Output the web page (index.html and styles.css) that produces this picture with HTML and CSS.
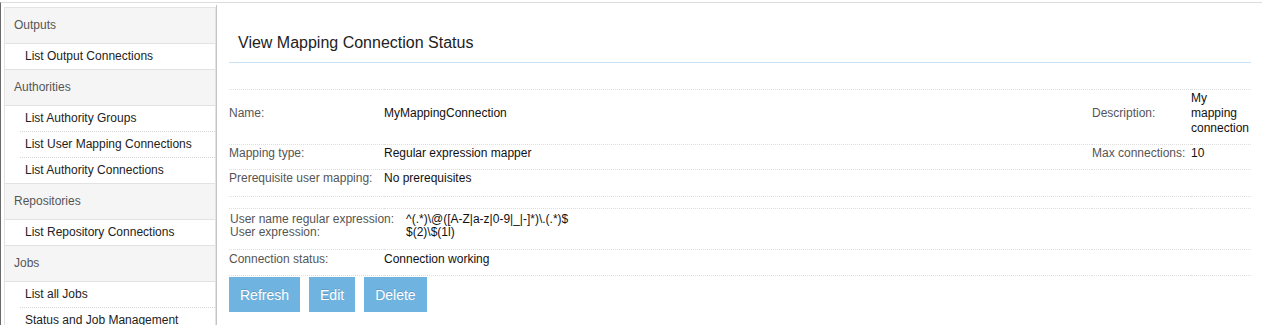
FILE: index.html
```html
<!DOCTYPE html>
<html>
<head>
<meta charset="utf-8">
<title>View Mapping Connection Status</title>
<link rel="stylesheet" href="styles.css">
</head>
<body>
<div class="page">
  <nav class="sidebar">
    <div class="group">
      <div class="group-head">Outputs</div>
      <div class="item">List Output Connections</div>
    </div>
    <div class="group">
      <div class="group-head">Authorities</div>
      <div class="item">List Authority Groups</div>
      <div class="item">List User Mapping Connections</div>
      <div class="item">List Authority Connections</div>
    </div>
    <div class="group">
      <div class="group-head">Repositories</div>
      <div class="item">List Repository Connections</div>
    </div>
    <div class="group">
      <div class="group-head">Jobs</div>
      <div class="item">List all Jobs</div>
      <div class="item">Status and Job Management</div>
    </div>
  </nav>
  <main class="content">
    <h1 class="title">View Mapping Connection Status</h1>
    <table class="details">
      <colgroup>
        <col class="c-label1">
        <col>
        <col class="c-label2">
        <col class="c-value2">
      </colgroup>
      <tr class="row">
        <td class="label">Name:</td>
        <td class="value">MyMappingConnection</td>
        <td class="label">Description:</td>
        <td class="value last">My mapping connection</td>
      </tr>
      <tr class="row">
        <td class="label">Mapping type:</td>
        <td class="value">Regular expression mapper</td>
        <td class="label">Max connections:</td>
        <td class="value last">10</td>
      </tr>
      <tr class="row row-prereq">
        <td class="label">Prerequisite user mapping:</td>
        <td class="value" colspan="3">No prerequisites</td>
      </tr>
      <tr class="row row-spacer">
        <td colspan="4"></td>
      </tr>
      <tr class="row row-nested">
        <td colspan="4">
          <div class="expr">
            <span class="label">User name regular expression:</span>
            <span class="value">^(.*)\@([A-Z|a-z|0-9|_|-]*)\.(.*)$</span>
            <span class="label">User expression:</span>
            <span class="value">$(2)\$(1l)</span>
          </div>
        </td>
      </tr>
      <tr class="row row-status">
        <td class="label">Connection status:</td>
        <td class="value" colspan="3">Connection working</td>
      </tr>
      <tr class="row row-end">
        <td colspan="4"></td>
      </tr>
    </table>
    <div class="actions">
      <button class="btn">Refresh</button>
      <button class="btn">Edit</button>
      <button class="btn">Delete</button>
    </div>
  </main>
</div>
</body>
</html>
```
FILE: styles.css
```css
html, body {
  margin: 0;
  padding: 0;
  background: #fff;
}
body {
  font-family: "Liberation Sans", Arial, sans-serif;
  font-size: 12px;
  color: #222;
  height: 325px;
  overflow: hidden;
}
.page {
  display: flex;
  align-items: flex-start;
  margin-top: 2px;
  border-top: 1px solid #dcdcdc;
  border-left: 1px solid #6a6a6a;
  min-height: 330px;
}
.sidebar {
  width: 210px;
  flex: none;
  margin: 4px 0 0 3px;
  border: 1px solid #e3e3e3;
  border-bottom: none;
}
.group-head {
  height: 32px;
  line-height: 32px;
  padding: 1px 0 2px 9px;
  background: #f5f5f5;
  border-bottom: 1px solid #e2e2e2;
  color: #555;
}
.item {
  height: 23px;
  line-height: 23px;
  padding: 1px 0 1px 5px;
  margin-left: 15px;
  border-bottom: 1px dotted #d6d6d6;
  color: #222;
  white-space: nowrap;
}
.item:last-child {
  margin-left: 0;
  padding-left: 20px;
  border-bottom: 1px solid #e2e2e2;
}
.content {
  flex: 1;
  align-self: stretch;
  margin-top: 2px;
  border-left: 1px solid #c4c4c4;
  padding: 0 11px 0 12px;
}
.title {
  margin: 0;
  padding: 28px 0 9px 9px;
  line-height: 20px;
  font-size: 16px;
  font-weight: normal;
  color: #222;
  border-bottom: 1px solid #c8e3f8;
}
.details {
  width: 100%;
  margin-top: 26px;
  border-collapse: collapse;
  table-layout: fixed;
}
.c-label1 { width: 155px; }
.c-label2 { width: 99px; }
.c-value2 { width: 60px; }
.details td {
  border-top: 1px dotted #dedede;
  padding: 1px 6px 8px 0;
  line-height: 15px;
  vertical-align: middle;
}
.details td.last { padding-right: 0; }
.details .label {
  color: #555;
  white-space: nowrap;
}
.details .value {
  color: #111;
}
.row-prereq td { padding-bottom: 10px; }
.row-spacer td {
  height: 11px;
  padding: 0;
}
.row-nested td {
  padding: 4px 0 10px 1px;
}
.expr {
  display: grid;
  grid-template-columns: 176px auto;
  line-height: 13px;
}
.row-status td {
  line-height: 14px;
  padding: 2px 0 9px 0;
}
.row-end td {
  height: 0;
  padding: 0;
}
.actions {
  display: flex;
  gap: 9px;
  margin-top: 1px;
}
.btn {
  height: 35px;
  padding: 0 11px;
  border: none;
  background: #6fb3e0;
  color: #fff;
  font-family: "Liberation Sans", Arial, sans-serif;
  font-size: 14px;
  text-shadow: 0 -1px 0 rgba(0,0,0,0.15);
  cursor: pointer;
}
```
